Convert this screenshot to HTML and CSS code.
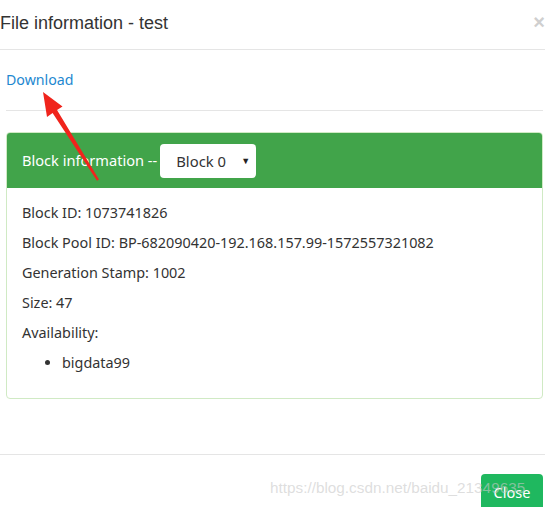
FILE: index.html
```html
<!DOCTYPE html>
<html>
<head>
<meta charset="utf-8">
<link rel="stylesheet" href="styles.css">
</head>
<body>
<div class="modal">
  <div class="modal-header">
    <h4 class="modal-title">File information - test</h4>
    <span class="close">&times;</span>
  </div>
  <div class="modal-body">
    <a class="download" href="#">Download</a>
    <hr class="sep">
    <div class="panel">
      <div class="panel-heading">
        <span class="panel-title">Block information --</span>
        <div class="select"><span>Block 0</span><span class="caret">&#9660;</span></div>
      </div>
      <div class="panel-body">
        <p>Block ID: 1073741826</p>
        <p>Block Pool ID: BP-682090420-192.168.157.99-1572557321082</p>
        <p>Generation Stamp: 1002</p>
        <p>Size: 47</p>
        <p>Availability:</p>
        <ul class="hosts"><li>bigdata99</li></ul>
      </div>
    </div>
  </div>
  <div class="modal-footer">
    <button class="btn-close">Close</button>
  </div>
  <div class="watermark">https://blog.csdn.net/baidu_21349635</div>
  <svg class="arrow" width="545" height="507" viewBox="0 0 545 507">
    <polygon points="43,92 62.5,106.5 57,110 99,179.5 97,180.8 52.6,113 47,117" fill="#f0241c"/>
  </svg>
</div>
</body>
</html>
```
FILE: styles.css
```css
html, body {
  margin: 0;
  padding: 0;
  background: #fff;
}
.modal {
  position: relative;
  width: 545px;
  height: 507px;
  overflow: hidden;
  font-family: "Noto Sans", "Open Sans", sans-serif;
  font-size: 14.4px;
  color: #333;
}
.modal-header {
  height: 49px;
  border-bottom: 1px solid #e5e5e5;
  display: flex;
  align-items: center;
  justify-content: space-between;
}
.modal-title {
  margin: 0;
  padding-bottom: 3px;
  font-family: "Liberation Sans", Arial, sans-serif;
  font-weight: normal;
  font-size: 18px;
  color: #333;
}
.close {
  font-family: "Liberation Sans", Arial, sans-serif;
  font-size: 20px;
  font-weight: bold;
  color: #cfcfcf;
  margin-right: 0;
  padding-bottom: 4px;
}
.modal-body {
  padding: 20px 2px 0 6px;
}
.download {
  display: block;
  line-height: 20px;
  color: #1e88d0;
  text-decoration: none;
  font-size: 14.2px;
}
.sep {
  margin: 20px 0 21px;
  border: 0;
  border-top: 1px solid #e5e5e5;
}
.panel {
  border: 1px solid #d0eac4;
  border-radius: 4px;
}
.panel-heading {
  height: 55px;
  background: #41a44a;
  color: #fff;
  display: flex;
  align-items: center;
  padding-left: 15px;
  border-radius: 3px 3px 0 0;
}
.panel-title {
  font-size: 14.6px;
  margin-right: 3px;
  padding-bottom: 1px;
}
.select {
  width: 96px;
  height: 34px;
  box-sizing: border-box;
  background: #fff;
  border-radius: 4px;
  color: #333;
  display: flex;
  align-items: center;
  justify-content: space-between;
  padding: 0 6px 0 16px;
  font-size: 14.8px;
}
.caret {
  font-size: 9px;
  color: #222;
}
.panel-body {
  padding: 15px;
}
.panel-body p {
  margin: 0 0 10px;
  line-height: 20px;
}
.hosts {
  margin: 0 0 10px;
  padding-left: 40px;
  line-height: 20px;
}
.modal-footer {
  position: absolute;
  left: 0;
  right: 0;
  top: 454px;
  border-top: 1px solid #e5e5e5;
  padding-top: 19px;
  display: flex;
  justify-content: flex-end;
}
.btn-close {
  width: 62px;
  height: 36px;
  margin-right: 2px;
  border: 0;
  border-radius: 4px;
  background: #1fb85f;
  color: #fff;
  font-family: "Noto Sans", sans-serif;
  font-size: 14.5px;
}
.watermark {
  position: absolute;
  left: 270px;
  top: 479px;
  font-family: "Liberation Sans", Arial, sans-serif;
  font-size: 15.3px;
  color: rgba(200, 200, 200, 0.6);
  white-space: nowrap;
}
.arrow {
  position: absolute;
  left: 0;
  top: 0;
  pointer-events: none;
}
```
